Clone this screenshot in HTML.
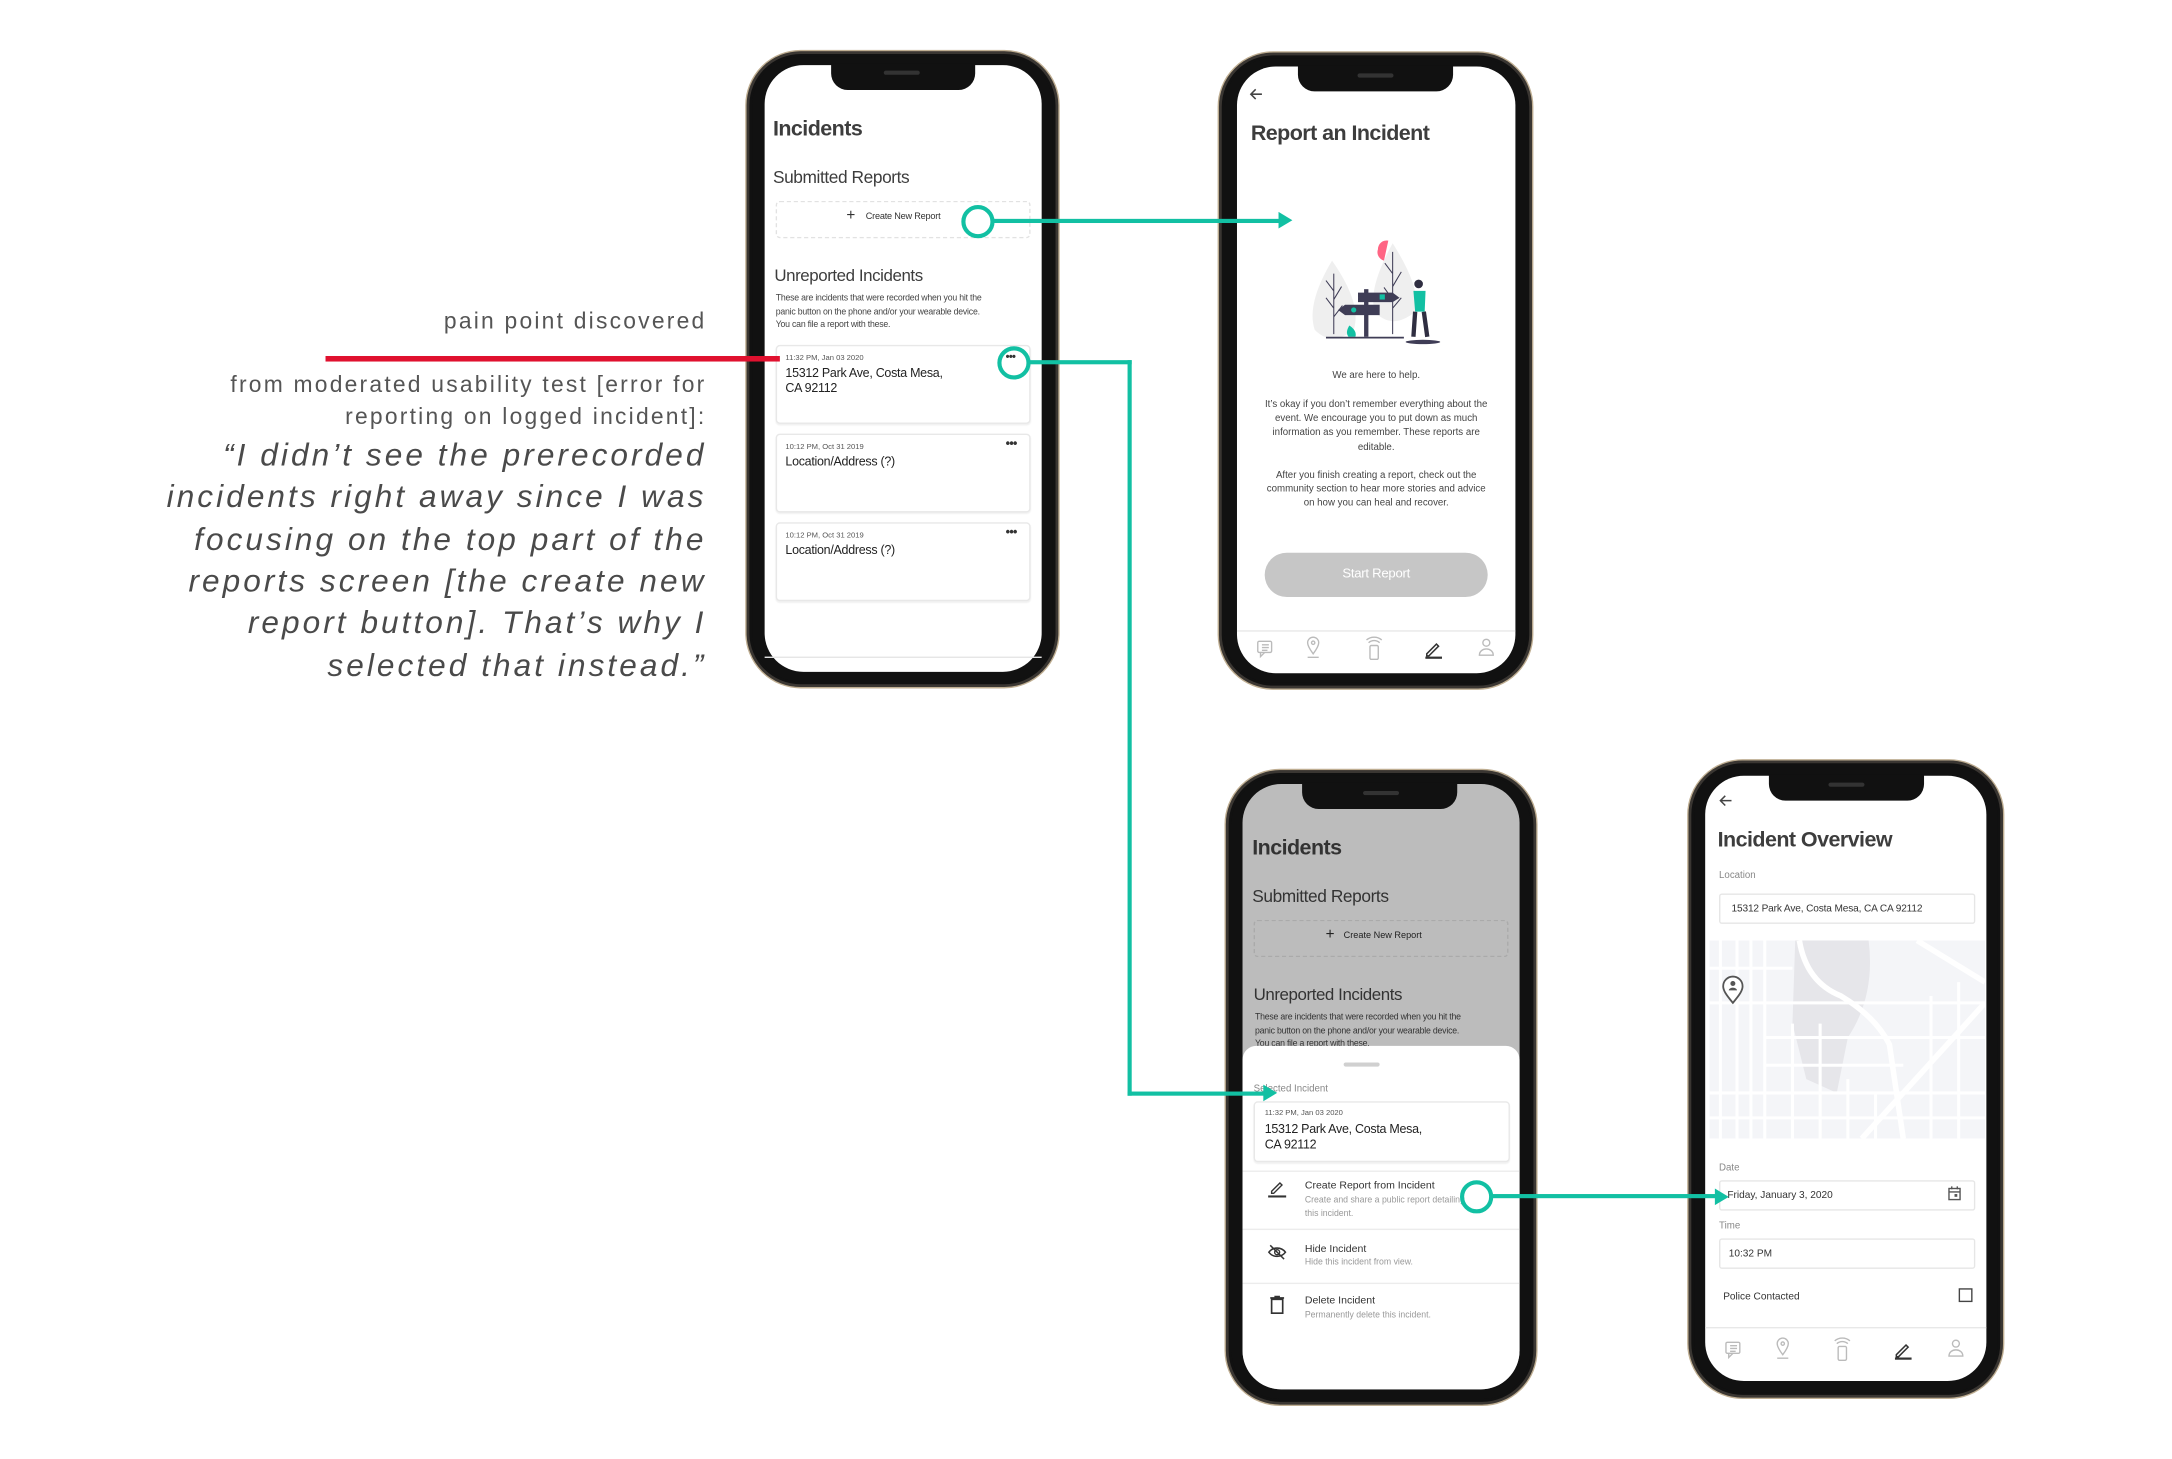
<!DOCTYPE html>
<html><head><meta charset="utf-8">
<style>
html,body{margin:0;padding:0;background:#fff;width:2172px;height:1458px;overflow:hidden}
#w{position:absolute;left:0;top:0;width:1568px;height:1053px;transform:scale(1.38520);transform-origin:0 0;font-family:"Liberation Sans",Arial,sans-serif;color:#444}
.a{position:absolute;white-space:nowrap}
.ph{position:absolute;background:#111;border:1.5px solid #bfae92;border-radius:40px;box-shadow:inset 0 0 0 2px #3a3632,inset 0 0 0 4px #111}
.sc{position:absolute;background:#fff;border-radius:28px;overflow:hidden}
.notch{position:absolute;background:#111;height:19px;border-radius:0 0 12px 12px}
.t1{font-weight:bold;font-size:15.5px;letter-spacing:-0.4px;color:#3d3d3d}
.t2{font-size:12px;letter-spacing:-0.3px;color:#3d3d3d;font-weight:bold}
.sm{font-size:6.3px;letter-spacing:-0.15px;color:#444;line-height:9.6px}
.card{position:absolute;border:1px solid #e8e8e8;border-radius:3px;background:#fff;box-shadow:0 1px 1px rgba(0,0,0,.06)}
.q{font-size:16.5px;letter-spacing:1.6px;color:#555;text-align:right;right:1058px}
.qi{font-style:italic;font-size:22.8px;letter-spacing:2.2px;color:#4a4a4a;text-align:right;right:1058px}
.tl{position:absolute;background:#12c0a3}
.ring{position:absolute;width:18px;height:18px;border:3px solid #12c0a3;border-radius:50%;background:transparent}
.arr{position:absolute;width:0;height:0;border-top:6px solid transparent;border-bottom:6px solid transparent;border-left:10px solid #12c0a3}
.dots{font-size:9px;letter-spacing:-0.5px;color:#333;font-weight:bold}
</style></head><body><div id="w">

<!-- left text -->
<div class="a q" style="top:223px">pain point discovered</div>
<div class="a q" style="top:269px">from moderated usability test [error for</div>
<div class="a q" style="top:292px">reporting on logged incident]:</div>
<div class="a qi" style="top:315px">“I didn’t see the prerecorded</div>
<div class="a qi" style="top:345px">incidents right away since I was</div>
<div class="a qi" style="top:376px">focusing on the top part of the</div>
<div class="a qi" style="top:406px">reports screen [the create new</div>
<div class="a qi" style="top:436px">report button]. That’s why I</div>
<div class="a qi" style="top:467px">selected that instead.”</div>

<!-- PHONE 1 -->
<div class="ph" style="left:538px;top:36px;width:225px;height:459px"></div>
<div class="sc" style="left:552px;top:47px;width:200px;height:438px"></div>
<div class="notch" style="left:600px;top:46px;width:104px"></div>
<div style="position:absolute;left:638px;top:51px;width:26px;height:3px;background:#333;border-radius:2px"></div>
<div class="a t1" style="left:558px;top:85px">Incidents</div>
<div class="a t2" style="left:558px;top:121px;font-weight:normal;font-size:12.5px">Submitted Reports</div>
<div style="position:absolute;left:560px;top:145px;width:182px;height:25px;border:1px dashed #e2e2e2;border-radius:3px"></div>
<div class="a" style="left:611px;top:150px;font-size:11px;color:#333">+</div>
<div class="a" style="left:625px;top:153px;font-size:6.6px;color:#333;letter-spacing:-0.15px">Create New Report</div>
<div class="a t2" style="left:559px;top:192px;font-weight:normal;font-size:12.2px">Unreported Incidents</div>
<div class="a sm" style="left:560px;top:211px">These are incidents that were recorded when you hit the<br>panic button on the phone and/or your wearable device.<br>You can file a report with these.</div>
<div class="card" style="left:560px;top:249px;width:182px;height:55px"></div>
<div class="a" style="left:567px;top:256px;font-size:5.5px;color:#555">11:32 PM, Jan 03 2020</div>
<div class="a" style="left:567px;top:264px;font-size:9px;color:#222;line-height:11px;letter-spacing:-0.2px">15312 Park Ave, Costa Mesa,<br>CA 92112</div>
<div class="card" style="left:560px;top:313px;width:182px;height:55px"></div>
<div class="a" style="left:567px;top:320px;font-size:5.5px;color:#555">10:12 PM, Oct 31 2019</div>
<div class="a" style="left:567px;top:328px;font-size:9px;color:#222;letter-spacing:-0.2px">Location/Address (?)</div>
<div class="a dots" style="left:726px;top:315px">•••</div>
<div class="card" style="left:560px;top:377px;width:182px;height:55px"></div>
<div class="a" style="left:567px;top:384px;font-size:5.5px;color:#555">10:12 PM, Oct 31 2019</div>
<div class="a" style="left:567px;top:392px;font-size:9px;color:#222;letter-spacing:-0.2px">Location/Address (?)</div>
<div class="a dots" style="left:726px;top:379px">•••</div>
<div class="a dots" style="left:726px;top:253px;font-size:8px">•••</div>
<div style="position:absolute;left:552px;top:474px;width:200px;height:1px;background:#e6e6e6"></div>

<!-- PHONE 2 -->
<div class="ph" style="left:879px;top:37px;width:226px;height:459px"></div>
<div class="sc" style="left:893px;top:48px;width:201px;height:438px"></div>
<div class="notch" style="left:937px;top:47px;width:112px"></div>
<div style="position:absolute;left:980px;top:53px;width:26px;height:3px;background:#333;border-radius:2px"></div>
<svg style="position:absolute;left:901px;top:62px" width="12" height="12" viewBox="0 0 12 12"><path d="M10 6H2M5.5 2.5L2 6l3.5 3.5" fill="none" stroke="#444" stroke-width="1.1"/></svg>
<div class="a t1" style="left:903px;top:88px">Report an Incident</div>
<svg style="position:absolute;left:924px;top:160px" width="144" height="100" viewBox="0 0 200 160">
<path d="M45 45 Q15 95 25 125 Q45 145 70 125 Q80 95 45 45Z" fill="#efefef"/>
<path d="M115 25 Q85 80 95 105 Q115 125 140 105 Q150 80 115 25Z" fill="#efefef"/>
<path d="M98 32 A10 10 0 0 1 110 22 L105 45 A10 10 0 0 1 98 32Z" fill="#ff6584"/>
<g stroke="#3f3d56" stroke-width="1.2" fill="none"><path d="M47 60V130M47 80L38 68M47 90L56 75M47 100L38 88M47 110L57 97"/><path d="M115 35V130M115 60L106 48M115 75L125 58M115 90L105 76M115 100L125 88"/></g>
<rect x="82" y="78" width="5" height="55" fill="#3f3d56"/>
<path d="M75 82H115L123 88L115 93H75Z" fill="#3f3d56"/><rect x="100" y="84" width="6" height="6" fill="#12c0a3"/>
<path d="M60 96H100V108H60L52 102Z" fill="#3f3d56"/><circle cx="70" cy="102" r="3" fill="#12c0a3"/>
<path d="M65 120Q60 128 64 133H72Q74 126 65 120Z" fill="#12c0a3"/>
<path d="M38 134H128" stroke="#3f3d56" stroke-width="2"/>
<circle cx="145" cy="72" r="5" fill="#2f2e41"/>
<path d="M139 80H153L152 104H141Z" fill="#12c0a3"/>
<path d="M141 104L139 133M151 104L155 133" stroke="#2f2e41" stroke-width="5"/>
<ellipse cx="150" cy="139" rx="20" ry="2.5" fill="#3f3d56"/>
</svg>
<div class="a" style="left:893px;top:268px;width:201px;text-align:center;font-size:7px;color:#444">We are here to help.</div>
<div class="a" style="left:893px;top:288px;width:201px;text-align:center;font-size:7px;color:#444;line-height:10.2px;white-space:normal">It’s okay if you don’t remember everything about the<br>event. We encourage you to put down as much<br>information as you remember. These reports are<br>editable.<br><br>After you finish creating a report, check out the<br>community section to hear more stories and advice<br>on how you can heal and recover.</div>
<div style="position:absolute;left:913px;top:399px;width:161px;height:32px;background:#c6c6c6;border-radius:16px;color:#fff;font-size:9.5px;text-align:center;line-height:32px;letter-spacing:-0.2px">Start Report</div>
<div style="position:absolute;left:893px;top:455px;width:201px;height:1px;background:#e8e8e8"></div>
<svg style="position:absolute;left:893px;top:458px" width="201" height="22" viewBox="0 0 201 22">
<g fill="none" stroke="#bbb" stroke-width="1"><rect x="15" y="5" width="10" height="8" rx="1"/><path d="M17 13v3l3-3M18 7.5h5M18 9.5h5M18 11.5h4"/>
<path d="M55 14c-3-4-4-6-4-8a4 4 0 0 1 8 0c0 2-1 4-4 8z"/><circle cx="55" cy="6" r="1.2"/><path d="M51 16.5h8"/>
<rect x="96" y="8" width="6" height="10" rx="1"/><path d="M95 6a6 6 0 0 1 8 0M93.5 4a8.5 8.5 0 0 1 11 0"/>
<circle cx="180" cy="6" r="2.5"/><path d="M175 15c0-3 2.5-4.5 5-4.5s5 1.5 5 4.5z"/></g>
<path d="M137 14l7-7 1.5 1.5-7 7h-1.5z" fill="none" stroke="#333" stroke-width="1.1"/><rect x="136" y="16" width="12" height="1.6" fill="#333"/>
</svg>

<!-- PHONE 3 -->
<div class="ph" style="left:884px;top:555px;width:224px;height:458px"></div>
<div class="sc" style="left:897px;top:566px;width:200px;height:437px;background:#bcbcbc"></div>
<div class="notch" style="left:940px;top:565px;width:112px"></div>
<div style="position:absolute;left:984px;top:571px;width:26px;height:3px;background:#333;border-radius:2px"></div>
<div class="a t1" style="left:904px;top:604px;color:#333">Incidents</div>
<div class="a t2" style="left:904px;top:640px;font-weight:normal;font-size:12.5px;color:#333">Submitted Reports</div>
<div style="position:absolute;left:905px;top:664px;width:182px;height:25px;border:1px dashed #aaa;border-radius:3px"></div>
<div class="a" style="left:957px;top:669px;font-size:11px;color:#222">+</div>
<div class="a" style="left:970px;top:672px;font-size:6.6px;color:#222">Create New Report</div>
<div class="a t2" style="left:905px;top:711px;font-weight:normal;font-size:12.2px;color:#333">Unreported Incidents</div>
<div class="a sm" style="left:906px;top:730px;color:#333">These are incidents that were recorded when you hit the<br>panic button on the phone and/or your wearable device.<br>You can file a report with these.</div>
<div style="position:absolute;left:897px;top:755px;width:200px;height:248px;background:#fff;border-radius:10px 10px 28px 28px"></div>
<div style="position:absolute;left:970px;top:767px;width:26px;height:3px;background:#d0d0d0;border-radius:2px"></div>
<div class="a" style="left:905px;top:783px;font-size:7px;color:#888">Selected Incident</div>
<div class="card" style="left:905px;top:795px;width:183px;height:42px"></div>
<div class="a" style="left:913px;top:801px;font-size:5.5px;color:#555">11:32 PM, Jan 03 2020</div>
<div class="a" style="left:913px;top:810px;font-size:9px;color:#222;line-height:11px;letter-spacing:-0.2px">15312 Park Ave, Costa Mesa,<br>CA 92112</div>
<div style="position:absolute;left:897px;top:845px;width:200px;height:1px;background:#ececec"></div>
<div style="position:absolute;left:897px;top:887px;width:200px;height:1px;background:#ececec"></div>
<div style="position:absolute;left:897px;top:926px;width:200px;height:1px;background:#ececec"></div>
<div class="a" style="left:942px;top:851px;font-size:7.6px;color:#333">Create Report from Incident</div>
<div class="a" style="left:942px;top:862px;font-size:6.3px;color:#999;line-height:9.5px">Create and share a public report detailing<br>this incident.</div>
<div class="a" style="left:942px;top:897px;font-size:7.6px;color:#333">Hide Incident</div>
<div class="a" style="left:942px;top:908px;font-size:6.3px;color:#999">Hide this incident from view.</div>
<div class="a" style="left:942px;top:934px;font-size:7.6px;color:#333">Delete Incident</div>
<div class="a" style="left:942px;top:946px;font-size:6.3px;color:#999">Permanently delete this incident.</div>
<svg style="position:absolute;left:914px;top:850px" width="16" height="100" viewBox="0 0 16 100">
<path d="M4 10l6-6 1.5 1.5-6 6H4z" fill="none" stroke="#333" stroke-width="1"/><rect x="1.5" y="13" width="13" height="1.5" fill="#333"/>
<path d="M2 54c3-4 9-4 12 0-3 4-9 4-12 0z" fill="none" stroke="#333" stroke-width="1.1"/><circle cx="8" cy="54" r="1.8" fill="none" stroke="#333" stroke-width="1"/><path d="M3 49l10 10" stroke="#333" stroke-width="1.1"/>
<rect x="4" y="88" width="8" height="10" fill="none" stroke="#333" stroke-width="1.2"/><path d="M3 87h10M6 86h4" stroke="#333" stroke-width="1.2"/>
</svg>

<!-- PHONE 4 -->
<div class="ph" style="left:1218px;top:548px;width:227px;height:460px"></div>
<div class="sc" style="left:1231px;top:560px;width:203px;height:437px"></div>
<div class="notch" style="left:1277px;top:559px;width:112px"></div>
<div style="position:absolute;left:1320px;top:565px;width:26px;height:3px;background:#333;border-radius:2px"></div>
<svg style="position:absolute;left:1240px;top:572px" width="12" height="12" viewBox="0 0 12 12"><path d="M10 6H2M5.5 2.5L2 6l3.5 3.5" fill="none" stroke="#444" stroke-width="1.1"/></svg>
<div class="a t1" style="left:1240px;top:598px">Incident Overview</div>
<div class="a" style="left:1241px;top:629px;font-size:7px;color:#888">Location</div>
<div style="position:absolute;left:1241px;top:645px;width:183px;height:20px;border:1px solid #e6e6e6;border-radius:2px"></div>
<div class="a" style="left:1250px;top:651px;font-size:7.3px;color:#333;letter-spacing:-0.1px">15312 Park Ave, Costa Mesa, CA CA 92112</div>
<svg style="position:absolute;left:1234px;top:679px" width="199" height="143" viewBox="0 0 199 143">
<rect width="199" height="143" fill="#f4f5f8"/>
<path d="M62 0H115Q120 40 100 70L92 110L70 100L60 60Z" fill="#e6e6ea"/>
<g stroke="#fff" stroke-width="2.2" fill="none">
<path d="M0 20H60M0 45H199M40 70H199M40 90H140M0 110H199M0 128H199M20 0V143M40 0V143M60 60V143M80 60V143M100 100V143M120 110V143M160 40V143M180 30V143M8 0V143M30 0V143"/>
<path d="M65 0Q70 30 95 40Q120 55 130 75L140 143" stroke-width="4"/>
<path d="M199 45L110 143M150 0L199 30" stroke-width="4"/>
</g>
<path d="M17 45c-5-6-7-9-7-12a7 7 0 0 1 14 0c0 3-2 6-7 12z" fill="#fff" stroke="#555" stroke-width="1.3"/><circle cx="17" cy="31" r="1.8" fill="#555"/><path d="M14 36a3 2 0 0 1 6 0z" fill="#555"/>
</svg>
<div class="a" style="left:1241px;top:840px;font-size:7px;color:#888">Date</div>
<div style="position:absolute;left:1241px;top:852px;width:183px;height:20px;border:1px solid #e6e6e6;border-radius:2px"></div>
<div class="a" style="left:1247px;top:858px;font-size:7.3px;color:#333">Friday, January 3, 2020</div>
<svg style="position:absolute;left:1406px;top:856px" width="10" height="11" viewBox="0 0 10 11"><rect x="1" y="2" width="8" height="8" fill="none" stroke="#555"/><path d="M1 4.5h8M3 0.5v2M7 0.5v2" stroke="#555"/><rect x="5" y="6" width="2" height="2" fill="#555"/></svg>
<div class="a" style="left:1241px;top:882px;font-size:7px;color:#888">Time</div>
<div style="position:absolute;left:1241px;top:894px;width:183px;height:20px;border:1px solid #e6e6e6;border-radius:2px"></div>
<div class="a" style="left:1248px;top:900px;font-size:7.3px;color:#333">10:32 PM</div>
<div class="a" style="left:1244px;top:931px;font-size:7.3px;color:#333">Police Contacted</div>
<div style="position:absolute;left:1414px;top:930px;width:8px;height:8px;border:1.2px solid #444"></div>
<div style="position:absolute;left:1231px;top:958px;width:203px;height:1px;background:#e8e8e8"></div>
<svg style="position:absolute;left:1232px;top:964px" width="201" height="22" viewBox="0 0 201 22">
<g fill="none" stroke="#bbb" stroke-width="1"><rect x="14" y="5" width="10" height="8" rx="1"/><path d="M16 13v3l3-3M17 7.5h5M17 9.5h5M17 11.5h4"/>
<path d="M55 14c-3-4-4-6-4-8a4 4 0 0 1 8 0c0 2-1 4-4 8z"/><circle cx="55" cy="6" r="1.2"/><path d="M51 16.5h8"/>
<rect x="95" y="8" width="6" height="10" rx="1"/><path d="M94 6a6 6 0 0 1 8 0M92.5 4a8.5 8.5 0 0 1 11 0"/>
<circle cx="180" cy="6" r="2.5"/><path d="M175 15c0-3 2.5-4.5 5-4.5s5 1.5 5 4.5z"/></g>
<path d="M137 14l7-7 1.5 1.5-7 7h-1.5z" fill="none" stroke="#333" stroke-width="1.1"/><rect x="136" y="16" width="12" height="1.6" fill="#333"/>
</svg>

<!-- overlays: red line + connectors (on top of phones) -->
<div style="position:absolute;left:235px;top:257px;width:328px;height:3.5px;background:#e0112f"></div>
<div class="ring" style="left:694px;top:148px"></div>
<div class="tl" style="left:717px;top:157.5px;width:208px;height:3px"></div>
<div class="arr" style="left:923px;top:153px"></div>
<div class="ring" style="left:720px;top:250px"></div>
<div class="tl" style="left:742px;top:259.5px;width:75px;height:3px"></div>
<div class="tl" style="left:814px;top:259.5px;width:3px;height:531px"></div>
<div class="tl" style="left:814px;top:787.5px;width:100px;height:3px"></div>
<div class="arr" style="left:912px;top:783px"></div>
<div class="ring" style="left:1054px;top:852px"></div>
<div class="tl" style="left:1077px;top:862px;width:163px;height:3px"></div>
<div class="arr" style="left:1238px;top:857.5px"></div>

</div></body></html>
